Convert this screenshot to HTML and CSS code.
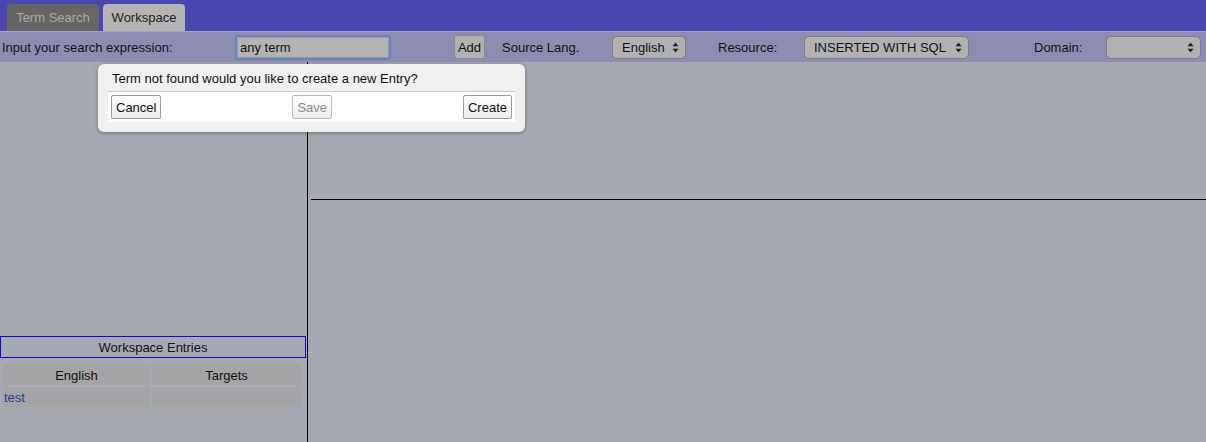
FILE: index.html
```html
<!DOCTYPE html>
<html>
<head>
<meta charset="utf-8">
<link rel="stylesheet" href="styles.css">
</head>
<body>
<div class="app">
  <header class="tabbar">
    <div class="tab tab-off">Term Search</div>
    <div class="tab tab-on">Workspace</div>
  </header>
  <div class="toolbar">
    <span class="lbl lbl-search">Input your search expression:</span>
    <div class="input">any term</div>
    <div class="btn-add">Add</div>
    <span class="lbl lbl-src">Source Lang.</span>
    <div class="sel sel-lang">English<svg class="arr" width="7" height="11" viewBox="0 0 7 11"><path d="M3.5 0.5 L6.5 4.2 L0.5 4.2 Z M3.5 10.5 L6.5 6.8 L0.5 6.8 Z" fill="#222"/></svg></div>
    <span class="lbl lbl-res">Resource:</span>
    <div class="sel sel-res">INSERTED WITH SQL<svg class="arr" width="7" height="11" viewBox="0 0 7 11"><path d="M3.5 0.5 L6.5 4.2 L0.5 4.2 Z M3.5 10.5 L6.5 6.8 L0.5 6.8 Z" fill="#222"/></svg></div>
    <span class="lbl lbl-dom">Domain:</span>
    <div class="sel sel-dom"><svg class="arr" width="7" height="11" viewBox="0 0 7 11"><path d="M3.5 0.5 L6.5 4.2 L0.5 4.2 Z M3.5 10.5 L6.5 6.8 L0.5 6.8 Z" fill="#222"/></svg></div>
  </div>
  <main class="main">
    <aside class="left">
      <div class="left-top"></div>
      <div class="ws-title">Workspace Entries</div>
      <div class="ws-table">
        <div class="cell head">English</div>
        <div class="cell head">Targets</div>
        <div class="cell"><a class="link">test</a></div>
        <div class="cell"></div>
      </div>
    </aside>
    <section class="right">
      <div class="right-top"></div>
      <div class="right-bottom"></div>
    </section>
  </main>
  <div class="dialog">
    <div class="dlg-msg">Term not found would you like to create a new Entry?</div>
    <div class="dlg-actions">
      <div class="dbtn">Cancel</div>
      <div class="dbtn dbtn-dis">Save</div>
      <div class="dbtn">Create</div>
    </div>
  </div>
</div>
</body>
</html>
```
FILE: styles.css
```css
* { box-sizing: border-box; }
html, body { margin: 0; padding: 0; }
body {
  font-family: "Liberation Sans", Arial, sans-serif;
  font-size: 13px;
  color: #111;
  background: #a6a9b1;
  width: 1206px;
  height: 442px;
  overflow: hidden;
}
.app { position: relative; width: 1206px; height: 442px; display: flex; flex-direction: column; }

.tabbar {
  height: 31px;
  background: #4747ae;
  display: flex;
  align-items: flex-end;
  padding-left: 7px;
  gap: 4px;
}
.tab {
  height: 27px;
  border-radius: 4px 4px 0 0;
  display: flex;
  align-items: center;
  justify-content: center;
  padding-bottom: 1px;
}
.tab-off { width: 92px; background: #666666; color: #a9a9a9; }
.tab-on { width: 82px; background: #b4b4b4; color: #222; }

.toolbar {
  height: 31px;
  background: #8d8db3;
  border-top: 1px solid #a2a2c4;
  display: flex;
  align-items: center;
  color: #111;
}
.lbl { display: block; }
.lbl-search { width: 235px; padding-left: 2px; }
.input {
  width: 156px;
  height: 25px;
  border: 2px solid #6a84b3;
  border-radius: 3px;
  background: #b3b3b3;
  padding: 3px 0 0 3px;
  box-shadow: inset 0 0 0 1px #8b9ab5;
}
.btn-add {
  margin-left: 63px;
  width: 31px;
  height: 24px;
  background: #b1b1b1;
  border: 1px solid #8a8a8a;
  border-radius: 3px;
  display: flex;
  align-items: center;
  justify-content: center;
}
.lbl-src { margin-left: 17px; width: 110px; }
.lbl-res { margin-left: 32px; width: 86px; }
.lbl-dom { margin-left: 65px; width: 72px; }
.sel {
  height: 23px;
  background: #b1b1b1;
  border: 1px solid #7c7c7c;
  border-radius: 5px;
  display: flex;
  align-items: center;
  padding-left: 9px;
  position: relative;
}
.arr { position: absolute; right: 6px; top: 5px; }
.sel-lang { width: 74px; }
.sel-res { width: 165px; }
.sel-dom { width: 95px; }

.main { flex: 1; display: flex; }
.left {
  width: 308px;
  border-right: 1px solid #000;
  display: flex;
  flex-direction: column;
}
.left-top { height: 274px; }
.ws-title {
  width: 306px;
  height: 22px;
  border: 1px solid #0a0ad0;
  display: flex;
  align-items: center;
  justify-content: center;
}
.ws-table {
  margin-top: 7px;
  margin-left: 3px;
  display: grid;
  grid-template-columns: 147px 149px;
  grid-auto-rows: 20px;
  gap: 2px;
}
.cell { background: #a4a4a6; display: flex; align-items: center; }
.cell.head { justify-content: center; }
.link { color: #1d3f98; padding-left: 1px; }

.right { flex: 1; display: flex; flex-direction: column; }
.right-top { height: 138px; margin-left: 3px; border-bottom: 1px solid #000; }

.dialog {
  position: absolute;
  left: 98px;
  top: 64px;
  width: 427px;
  height: 68px;
  background: #f0f0f0;
  border-radius: 6px;
  box-shadow: 0 1px 4px rgba(0,0,0,0.35);
  padding: 0 10px;
}
.dlg-msg {
  height: 28px;
  padding: 7px 0 0 4px;
  border-bottom: 1px solid #c8c8c8;
}
.dlg-actions {
  height: 30px;
  background: #fff;
  display: flex;
  justify-content: space-between;
  align-items: center;
  padding: 0 3px;
}
.dbtn {
  height: 24px;
  padding: 0 4px;
  border: 1px solid #9a9a9a;
  border-radius: 2px;
  background: linear-gradient(#ffffff, #ececec);
  display: flex;
  align-items: center;
  color: #111;
}
.dbtn-dis { color: #8a8a8a; border-color: #b8b8b8; }
```
